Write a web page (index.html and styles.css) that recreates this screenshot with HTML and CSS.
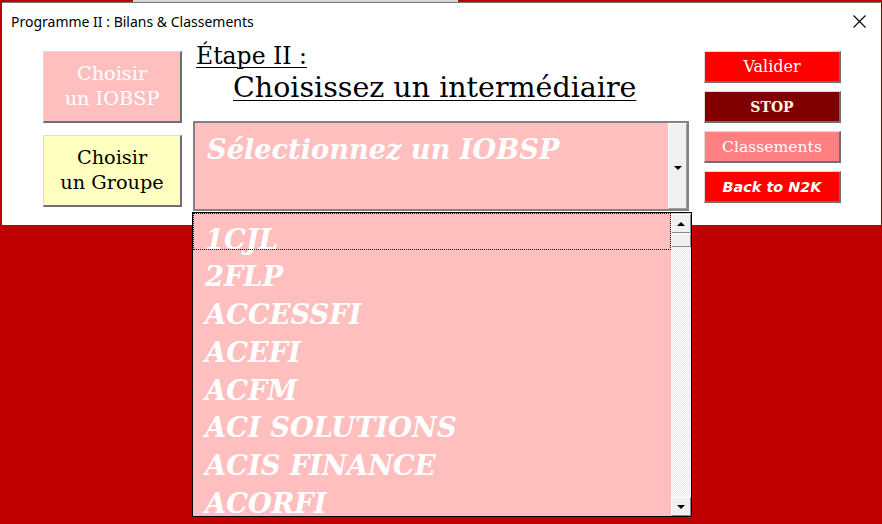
FILE: index.html
```html
<!DOCTYPE html>
<html lang="fr">
<head>
<meta charset="utf-8">
<title>Programme II : Bilans &amp; Classements</title>
<link rel="stylesheet" href="styles.css">
</head>
<body>
<div class="topstrip"><span class="ts-red1"></span><span class="ts-gray"></span><span class="ts-red2"></span></div>
<div class="window">
  <div class="titlebar">
    <span class="title">Programme II : Bilans &amp; Classements</span>
    <svg class="close" width="13" height="13" viewBox="0 0 13 13"><path d="M0.5 0.5L12.5 12.5M12.5 0.5L0.5 12.5" stroke="#000" stroke-width="1.1" fill="none"/></svg>
  </div>
  <div class="content">
    <div class="leftcol">
      <div class="btn btn-big btn-iobsp">Choisir<br>un IOBSP</div>
      <div class="btn btn-big btn-groupe">Choisir<br>un Groupe</div>
    </div>
    <div class="center">
      <div class="step"><span class="u">Étape II :</span></div>
      <div class="choose"><span class="u">Choisissez un intermédiaire</span></div>
      <div class="combo">
        <div class="combo-field">
          <div class="combo-text">Sélectionnez un IOBSP</div>
          <div class="combo-btn"><span class="tri-down"></span></div>
        </div>
        <div class="dropdown">
          <div class="items">
            <div class="item selected">1CJL</div>
            <div class="item">2FLP</div>
            <div class="item">ACCESSFI</div>
            <div class="item">ACEFI</div>
            <div class="item">ACFM</div>
            <div class="item">ACI SOLUTIONS</div>
            <div class="item">ACIS FINANCE</div>
            <div class="item">ACORFI</div>
          </div>
          <div class="scrollbar">
            <div class="sb-btn"><span class="tri-up"></span></div>
            <div class="sb-thumb"></div>
            <div class="sb-track"></div>
            <div class="sb-btn"><span class="tri-down"></span></div>
          </div>
        </div>
      </div>
    </div>
    <div class="rightcol">
      <div class="btn btn-small btn-valider">Valider</div>
      <div class="btn btn-small btn-stop">STOP</div>
      <div class="btn btn-small btn-class">Classements</div>
      <div class="btn btn-small btn-back">Back to N2K</div>
    </div>
  </div>
</div>
</body>
</html>
```

FILE: styles.css
```css
html, body {
  margin: 0;
  padding: 0;
}
body {
  background: #c00000;
  width: 882px;
  height: 524px;
  overflow: hidden;
  font-family: "DejaVu Serif", serif;
}
.topstrip {
  display: flex;
  height: 2px;
}
.ts-red1 { width: 133px; background: #c00000; }
.ts-gray { width: 325px; background: #d6d6d6; }
.ts-red2 { flex: 1; background: #c00000; }

.window {
  margin-left: 2px;
  width: 879px;
  height: 222px;
  background: #fff;
  border-top: 1px solid #7a7a7a;
  border-right: 1px solid #5a1010;
}
.titlebar {
  height: 40px;
  display: flex;
  justify-content: space-between;
  align-items: flex-start;
}
.title {
  font-family: "Noto Sans", sans-serif;
  font-size: 14px;
  color: #000;
  padding-left: 9px;
  padding-top: 9px;
  line-height: 20px;
}
.close {
  margin-top: 12px;
  margin-right: 15px;
}
.content {
  display: flex;
  align-items: flex-start;
}
.leftcol {
  margin-left: 41px;
  width: 139px;
  padding-top: 8px;
  display: flex;
  flex-direction: column;
  gap: 12px;
}
.btn {
  box-sizing: border-box;
  border-top: 1px solid #dcdcdc;
  border-left: 1px solid #dcdcdc;
  border-right: 2px solid #6e6e6e;
  border-bottom: 2px solid #6e6e6e;
  text-align: center;
  display: flex;
  align-items: center;
  justify-content: center;
}
.btn-big {
  height: 72px;
  font-size: 19.3px;
  line-height: 25px;
  padding-bottom: 2px;
}
.btn-iobsp { background: #ffbfbf; color: #fff; }
.btn-groupe { background: #ffffc0; color: #000; }

.center {
  margin-left: 11px;
  width: 498px;
}
.u {
  text-decoration: underline;
  text-decoration-thickness: 1px;
  text-underline-offset: 3px;
}
.step {
  font-size: 23.5px;
  line-height: 24px;
  padding-top: 1px;
  padding-left: 3px;
  color: #000;
}
.choose {
  font-size: 28.5px;
  line-height: 30px;
  padding-left: 40px;
  margin-top: 5px;
  color: #000;
}
.combo {
  position: relative;
  margin-top: 18px;
}
.combo-field {
  box-sizing: border-box;
  width: 496px;
  height: 90px;
  border: 2px solid #828282;
  background: #ffbfbf;
  display: flex;
}
.combo-text {
  flex: 1;
  color: #fff;
  font-weight: bold;
  font-style: italic;
  font-size: 27.2px;
  line-height: 30px;
  padding-left: 12px;
  padding-top: 11px;
}
.combo-btn {
  box-sizing: border-box;
  width: 19px;
  height: 86px;
  background: #f0f0f0;
  border-top: 1px solid #fff;
  border-left: 1px solid #fff;
  border-right: 1px solid #a0a0a0;
  border-bottom: 1px solid #a0a0a0;
  display: flex;
  align-items: center;
  justify-content: center;
  padding-top: 4px;
}
.tri-down {
  width: 0;
  height: 0;
  border-left: 4px solid transparent;
  border-right: 4px solid transparent;
  border-top: 4px solid #000;
}
.tri-up {
  width: 0;
  height: 0;
  border-left: 4px solid transparent;
  border-right: 4px solid transparent;
  border-bottom: 4px solid #000;
}
.dropdown {
  position: absolute;
  left: -1px;
  top: 91px;
  box-sizing: border-box;
  width: 500px;
  height: 305px;
  border: 1px solid #000;
  background: #ffbfbf;
  display: flex;
  overflow: hidden;
}
.items {
  flex: 1;
}
.item {
  box-sizing: border-box;
  height: 37.75px;
  padding-top: 15.4px;
  line-height: 22.35px;
  padding-left: 12px;
  color: #fff;
  font-weight: bold;
  font-style: italic;
  font-size: 27.3px;
  white-space: nowrap;
}
.item.selected {
  outline: 1px dotted #000;
  outline-offset: -1px;
  height: 37px;
}
.scrollbar {
  width: 20px;
  display: flex;
  flex-direction: column;
  padding-top: 1px;
}
.sb-btn {
  box-sizing: border-box;
  height: 19px;
  background: #f0f0f0;
  border-top: 1px solid #fff;
  border-left: 1px solid #fff;
  border-right: 1px solid #8a8a8a;
  border-bottom: 1px solid #8a8a8a;
  display: flex;
  align-items: center;
  justify-content: center;
}
.sb-thumb {
  box-sizing: border-box;
  height: 14px;
  background: #f0f0f0;
  border-top: 1px solid #fff;
  border-left: 1px solid #fff;
  border-right: 1px solid #8a8a8a;
  border-bottom: 1px solid #8a8a8a;
}
.sb-track {
  flex: 1;
  background-color: #fff;
  background-image: repeating-conic-gradient(#e8e8e8 0 25%, #ffffff 0 50%);
  background-size: 2px 2px;
}
.rightcol {
  margin-left: 13px;
  width: 137px;
  padding-top: 8px;
  display: flex;
  flex-direction: column;
  gap: 8px;
}
.btn-small {
  height: 32px;
  font-size: 16px;
  line-height: 20px;
}
.btn-valider { background: #ff0000; color: #fff; }
.btn-stop { background: #800000; color: #fff4e0; font-weight: bold; font-size: 14px; }
.btn-class { background: #ff8080; color: #fff; font-size: 15.6px; }
.btn-back {
  background: #ff0000;
  color: #fff;
  font-family: "DejaVu Sans", sans-serif;
  font-weight: bold;
  font-style: italic;
  font-size: 14.4px;
}
```
